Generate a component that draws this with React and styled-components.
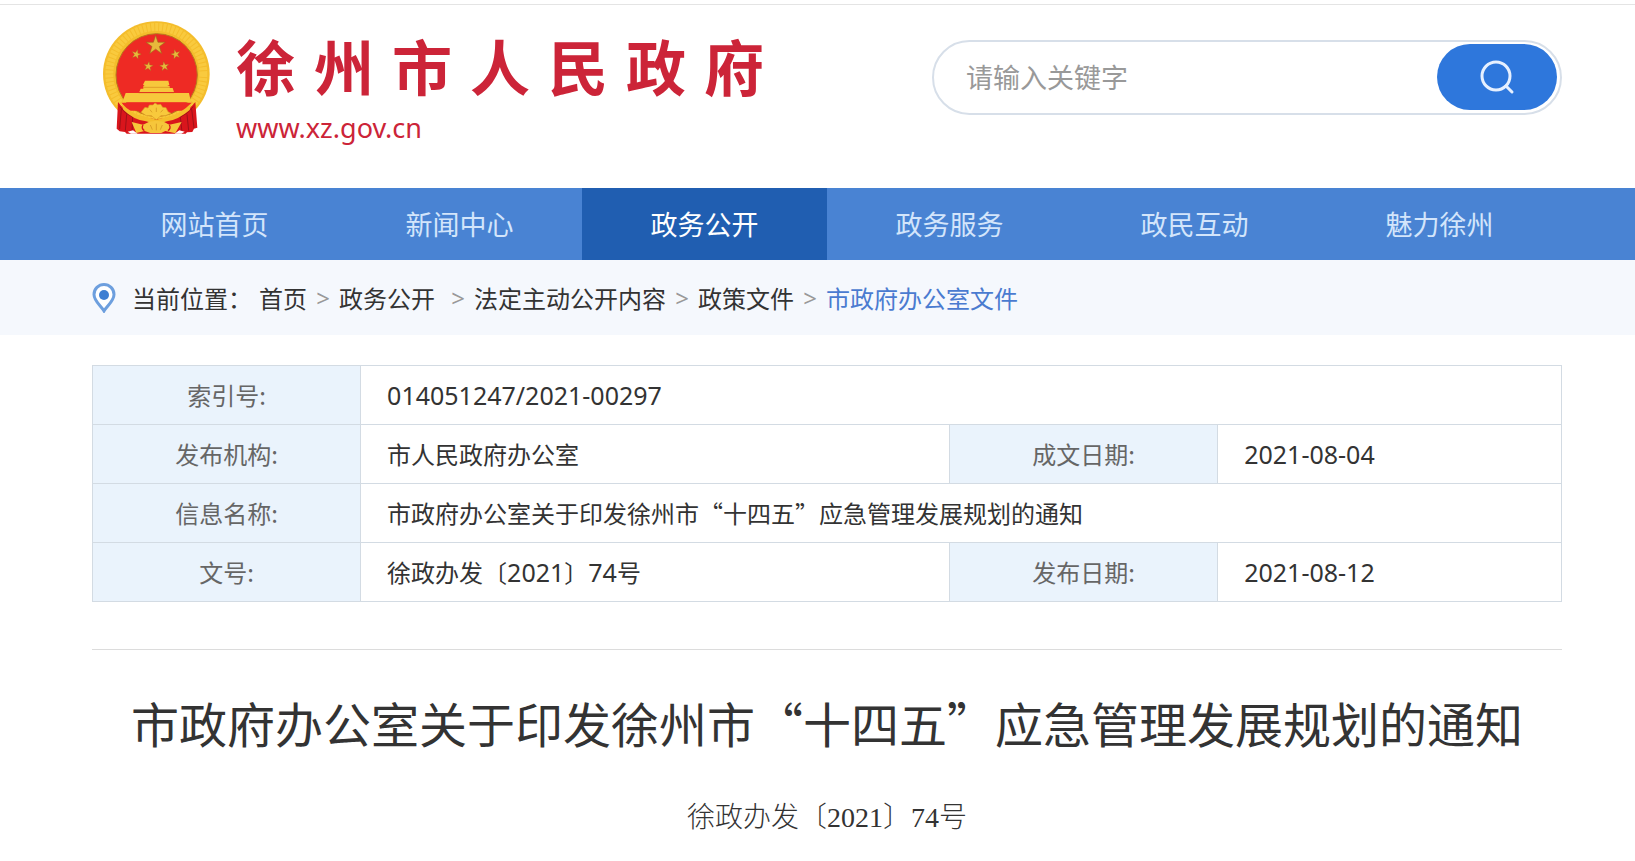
import React from 'react';
import styled, { createGlobalStyle } from 'styled-components';

const SANS = '"Noto Sans CJK SC", "Noto Sans", sans-serif';
const LATIN = '"Noto Sans", "Noto Sans CJK SC", sans-serif';

const NAV = ['网站首页', '新闻中心', '政务公开', '政务服务', '政民互动', '魅力徐州'];

const CRUMBS = [
    { name: '首页' },
    { name: '政务公开', wide: true },
    { name: '法定主动公开内容' },
    { name: '政策文件' },
];

const GlobalStyle = createGlobalStyle`
    * {
        box-sizing: border-box;
    }

    body {
        margin: 0;
        background: #fff;
        color: #333;
        font-family: ${SANS};
        font-size: 24px;
    }

    a {
        text-decoration: none;
    }
`;

const Page = styled.div`
    margin-top: 4px;
    border-top: 1px solid #e4e4e4;
`;

const Container = styled.div`
    padding: 0 73px 0 92px;
`;

const HeaderRow = styled(Container)`
    display: flex;
    justify-content: space-between;
    align-items: flex-start;
    height: 183px;
`;

const Brand = styled.a`
    display: flex;
    gap: 24px;
    padding: 16px 0 0 10px;
    color: #cc2438;
`;

const EmblemSvg = styled.svg`
    display: block;
    width: 110px;
    height: 115px;
`;

const BrandText = styled.div`
    display: flex;
    flex-direction: column;
`;

const BrandName = styled.span`
    padding-top: 14px;
    font-family: "Liberation Sans", "Noto Sans CJK SC", sans-serif;
    font-size: 60px;
    line-height: 72px;
    font-weight: 700;
    letter-spacing: 18px;
    white-space: nowrap;
`;

const BrandUrl = styled.span`
    font-family: ${LATIN};
    font-size: 27px;
    line-height: 42px;
`;

const SearchForm = styled.form`
    display: flex;
    align-items: center;
    width: 630px;
    height: 75px;
    margin-top: 35px;
    padding: 2px 3px 4px 2px;
    border: 2px solid #d7dfe9;
    border-radius: 38px;
`;

const SearchInput = styled.input`
    flex: 1;
    min-width: 0;
    padding: 0 30px;
    border: 0;
    outline: 0;
    background: none;
    color: #333;
    font-family: ${SANS};
    font-size: 27px;

    &::placeholder {
        color: #999;
        opacity: 1;
    }
`;

const SearchButton = styled.button`
    display: flex;
    align-items: center;
    justify-content: center;
    width: 120px;
    height: 66px;
    padding: 0;
    border: 0;
    border-radius: 33px;
    background: #2e77dc;
    cursor: pointer;
`;

const NavBar = styled.nav`
    background: #4983d3;
`;

const NavList = styled(Container)`
    display: flex;
`;

const NavLink = styled.a`
    flex: 1;
    background: ${({ $active }) => ($active ? '#205eb1' : 'transparent')};
    color: ${({ $active }) => ($active ? '#fff' : '#d3e5fb')};
    font-size: 27px;
    line-height: 72px;
    text-align: center;
`;

const CrumbBar = styled.div`
    background: #f5f8fd;
`;

const CrumbRow = styled(Container)`
    display: flex;
    align-items: center;
    height: 75px;
    white-space: nowrap;
`;

const CrumbLabel = styled.span`
    width: 127px;
    margin-left: 16px;
`;

const Crumb = styled.a`
    padding-right: ${({ $wide }) => ($wide ? '7px' : '0')};
    color: ${({ $current }) => ($current ? '#4a7bd0' : '#333')};
`;

const Separator = styled.span`
    width: 32px;
    color: #999;
    font-family: ${LATIN};
    font-size: 24px;
    text-align: center;
`;

const Main = styled(Container)`
    padding-top: 30px;
`;

const InfoTable = styled.table`
    width: 100%;
    border-collapse: collapse;
    table-layout: fixed;
`;

const LabelCell = styled.th`
    height: 59px;
    padding: 0;
    border: 1px solid #d3dbe3;
    background: #eaf3fc;
    color: #666;
    font-weight: 400;
    line-height: 36px;
`;

const ValueCell = styled.td`
    height: 59px;
    padding: 0 26px;
    border: 1px solid #d3dbe3;
    line-height: 36px;
`;

const Numeric = styled.span`
    font-family: ${LATIN};
    font-size: 25px;
`;

const Article = styled.article`
    margin-top: 47px;
    padding-top: 36px;
    border-top: 1px solid #dcdcdc;
    text-align: center;
`;

const Title = styled.h1`
    margin: 0;
    font-size: 48px;
    line-height: 72px;
    font-weight: 400;
`;

const DocNumber = styled.p`
    margin: 40px 0 0;
    font-family: "Liberation Serif", "Noto Sans CJK SC", serif;
    font-size: 28px;
    line-height: 40px;
    font-weight: 300;
`;

const STAR = 'M0-10 2.3-3.1 9.5-3.1 3.7 1.2 5.9 8.1 0 3.8-5.9 8.1-3.7 1.2-9.5-3.1-2.3-3.1Z';

const Emblem = () => (
    <EmblemSvg viewBox="20 18 330 345" role="img" aria-label="国徽">
        <ellipse cx="183" cy="177" rx="160" ry="158" fill="#f4bd2c" />
        <circle cx="183" cy="177" r="141" fill="none" stroke="#f9ca3e" strokeWidth="24" strokeDasharray="9 3" />
        <ellipse cx="184" cy="180" rx="122" ry="124" fill="#ee2a24" stroke="#b8781e" strokeWidth="3" />
        <g fill="#e8b83b" stroke="#99671d" strokeWidth="0.6">
            <path d={STAR} transform="translate(181 91) scale(3)" />
            <path d={STAR} transform="translate(123 118) scale(1.5) rotate(15)" />
            <path d={STAR} transform="translate(241 118) scale(1.5) rotate(-15)" />
            <path d={STAR} transform="translate(159 154) scale(1.5) rotate(8)" />
            <path d={STAR} transform="translate(207 154) scale(1.5) rotate(-8)" />
        </g>
        {/* gate tower */}
        <g fill="#f7c83c">
            <path d="M149 197h70l3 13-6 3H148l-5-4Z" />
            <path d="M144 213h79v6h9l4 12H132l4-10h8Z" />
            <path d="M91 234h190l6 28H81Z" />
        </g>
        <path d="M144 217h80" stroke="#d6881e" strokeWidth="2" />
        <path d="M130 233h106" stroke="#d6441e" strokeWidth="2" />
        <path d="M79 263h210l-14 24H94Z" fill="#ee2a24" />
        {/* drapery */}
        <path d="M68 261q18 28 61 44l54 8 54-8q43-16 63-44l6 77-10 3-5 10-16 1-4 4H94l-5-5-16-2-9-8Z" fill="#d9151c" />
        <path d="M73 275q15 21 39 31l-2 45M78 282l-5 60M94 298l-4 49M294 275q-15 21-39 31l5 45M289 282l7 57M275 298l5 49" fill="none" stroke="#9f1118" strokeWidth="3" />
        <path d="M77 263q35 38 75 42l31 9 32-9q38-5 74-42l-6 22q-35 30-68 34l-32 9-31-9q-38-5-68-35Z" fill="#f4bd2c" />
        {/* gear */}
        <path d="M137 292l12-15 9 2 4-9h11l6-6 8 5 9-1 6 9 10 1 6 12 9 5-17 7h-13l-14 12-15-12h-15Z" fill="#f8c93c" stroke="#d99d23" strokeWidth="2" />
        <path d="M164 284l6 8M183 278v13M203 284l-7 8" fill="none" stroke="#cf8c1c" strokeWidth="2" />
        {/* ribbon ends */}
        <path d="M109 321l34 8 19-9 21-3 22 3 17 9 37-8-19 34-30-7-12 6h-33l-17-6-25 6Z" fill="#f6c63b" />
        <path d="M165 330l6 14M183 326v20M201 330l-6 14" fill="none" stroke="#cb8b1d" strokeWidth="2" />
        <path d="M143 330q-6 10 4 17M222 330q6 10-4 17" fill="none" stroke="#d9151c" strokeWidth="4" />
        <path d="M97 350l10 6h20l-14-10ZM268 350l-10 6h-20l14-10Z" fill="#fff" />
    </EmblemSvg>
);

const SearchIcon = () => (
    <svg width="36" height="36" viewBox="0 0 36 36" fill="none" stroke="#e6f0ff" strokeWidth="3" aria-hidden="true">
        <circle cx="17" cy="17" r="14" />
        <path d="M27 27l6 6" strokeLinecap="round" />
    </svg>
);

const PinIcon = () => (
    <svg width="24" height="30" viewBox="0 0 24 30" aria-hidden="true">
        <path d="M12 28C9 23 2 18 2 11.5a10 10 0 0 1 20 0C22 18 15 23 12 28Z" fill="#fff" stroke="#6d9fde" strokeWidth="3" />
        <circle cx="12" cy="12" r="5" fill="#3f7fd2" />
    </svg>
);

export default function App() {
    return (
        <>
            <GlobalStyle />
            <Page>
                <header>
                    <HeaderRow>
                        <Brand href="#">
                            <Emblem />
                            <BrandText>
                                <BrandName>徐州市人民政府</BrandName>
                                <BrandUrl>www.xz.gov.cn</BrandUrl>
                            </BrandText>
                        </Brand>
                        <SearchForm role="search" onSubmit={e => e.preventDefault()}>
                            <SearchInput type="text" placeholder="请输入关键字" aria-label="请输入关键字" />
                            <SearchButton type="submit" aria-label="搜索">
                                <SearchIcon />
                            </SearchButton>
                        </SearchForm>
                    </HeaderRow>
                    <NavBar>
                        <NavList>
                            {NAV.map(name => (
                                <NavLink key={name} href="#" $active={name === '政务公开'}>
                                    {name}
                                </NavLink>
                            ))}
                        </NavList>
                    </NavBar>
                </header>
                <CrumbBar>
                    <CrumbRow>
                        <PinIcon />
                        <CrumbLabel>当前位置：</CrumbLabel>
                        {CRUMBS.map(({ name, wide }) => (
                            <React.Fragment key={name}>
                                <Crumb href="#" $wide={wide}>{name}</Crumb>
                                <Separator>&gt;</Separator>
                            </React.Fragment>
                        ))}
                        <Crumb href="#" $current>市政府办公室文件</Crumb>
                    </CrumbRow>
                </CrumbBar>
                <Main as="main">
                    <InfoTable>
                        <colgroup>
                            <col width="18.25%" />
                            <col width="40.1%" />
                            <col width="18.25%" />
                            <col />
                        </colgroup>
                        <tbody>
                            <tr>
                                <LabelCell scope="row">索引号:</LabelCell>
                                <ValueCell colSpan={3}>
                                    <Numeric>014051247/2021-00297</Numeric>
                                </ValueCell>
                            </tr>
                            <tr>
                                <LabelCell scope="row">发布机构:</LabelCell>
                                <ValueCell>市人民政府办公室</ValueCell>
                                <LabelCell scope="row">成文日期:</LabelCell>
                                <ValueCell>
                                    <Numeric>2021-08-04</Numeric>
                                </ValueCell>
                            </tr>
                            <tr>
                                <LabelCell scope="row">信息名称:</LabelCell>
                                <ValueCell colSpan={3}>市政府办公室关于印发徐州市“十四五”应急管理发展规划的通知</ValueCell>
                            </tr>
                            <tr>
                                <LabelCell scope="row">文号:</LabelCell>
                                <ValueCell>
                                    徐政办发〔<Numeric>2021</Numeric>〕<Numeric>74</Numeric>号
                                </ValueCell>
                                <LabelCell scope="row">发布日期:</LabelCell>
                                <ValueCell>
                                    <Numeric>2021-08-12</Numeric>
                                </ValueCell>
                            </tr>
                        </tbody>
                    </InfoTable>
                    <Article>
                        <Title>市政府办公室关于印发徐州市“十四五”应急管理发展规划的通知</Title>
                        <DocNumber>徐政办发〔2021〕74号</DocNumber>
                    </Article>
                </Main>
            </Page>
        </>
    );
}
